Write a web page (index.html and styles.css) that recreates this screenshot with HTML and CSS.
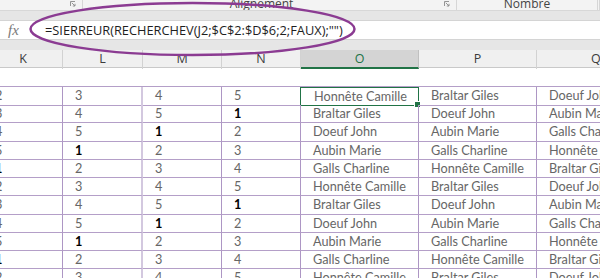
FILE: index.html
```html
<!DOCTYPE html>
<html lang="fr">
<head>
<meta charset="utf-8">
<title>Excel</title>
<link rel="stylesheet" href="styles.css">
</head>
<body>
<div class="app">
  <div class="ribbon">
    <div class="rgroup g1"><svg class="launch" viewBox="0 0 6 6" width="6" height="6"><path d="M0.5 5V0.5H5 M1.8 1.8L5 5 M5 2.8V5H2.8" fill="none" stroke="#8a8a8a" stroke-width="0.9"/></svg></div>
    <div class="rgroup g2"><span class="rlabel">Alignement</span><svg class="launch" viewBox="0 0 6 6" width="6" height="6"><path d="M0.5 5V0.5H5 M1.8 1.8L5 5 M5 2.8V5H2.8" fill="none" stroke="#8a8a8a" stroke-width="0.9"/></svg></div>
    <div class="rgroup g3"><span class="rlabel">Nombre</span></div>
    <div class="rgroup g4"></div>
  </div>
  <div class="band"></div>
  <div class="fbar">
    <div class="fx">fx</div>
    <div class="formula">=SIERREUR(RECHERCHEV(J2;$C$2:$D$6;2;FAUX);"")</div>
  </div>
  <div class="band band2"></div>
  <div class="colhead cols">
    <div class="hc hk">K</div>
    <div class="hc">L</div>
    <div class="hc">M</div>
    <div class="hc">N</div>
    <div class="hc sel">O</div>
    <div class="hc">P</div>
    <div class="hc hq">Q</div>
  </div>
  <div class="blank"></div>
  <div class="sheet" id="sheet"></div>
  <svg class="ring" width="600" height="278" viewBox="0 0 600 278"><ellipse cx="192.5" cy="29" rx="162" ry="26" fill="none" stroke="#8b3b92" stroke-width="2.5"/></svg>
</div>
<script>
  var nums = [3,4,5,1,2];
  var names = ["Honnête Camille","Braltar Giles","Doeuf John","Aubin Marie","Galls Charline"];
  var sheet = document.getElementById("sheet");
  var html = "";
  for (var r = 0; r < 11; r++) {
    html += '<div class="row cols">';
    var k = [2,3,4,5,1][r % 5];
    html += '<div class="c k"><span class="kv' + (k === 1 ? ' b' : '') + '">' + k + '</span></div>';
    for (var c = 0; c < 3; c++) {
      var v = nums[(r + c) % 5];
      html += '<div class="c' + (c === 0 ? ' lcol' : '') + (v === 1 ? ' b' : '') + '">' + v + '</div>';
    }
    for (var c2 = 0; c2 < 3; c2++) {
      html += '<div class="c' + (r === 0 && c2 === 0 ? ' active' : '') + '">' + names[(r + c2) % 5] + '</div>';
    }
    html += '</div>';
  }
  sheet.innerHTML = html;
</script>
</body>
</html>
```
FILE: styles.css
```css
* { box-sizing: border-box; }
html, body { margin: 0; padding: 0; }
body {
  width: 600px;
  height: 278px;
  overflow: hidden;
  background: #ffffff;
  font-family: "Open Sans", "Noto Sans", sans-serif;
}
.app { position: relative; width: 600px; height: 278px; overflow: hidden; }

.ribbon {
  height: 11px;
  background: #f3f3f3;
  border-bottom: 1px solid #d8d8d8;
  display: flex;
  overflow: hidden;
}
.rgroup {
  position: relative;
  height: 10px;
  border-right: 1px solid #d6d6d6;
  display: flex;
  align-items: flex-start;
  justify-content: center;
  overflow: hidden;
}
.g1 { width: 83px; }
.g2 { width: 374px; }
.g3 { width: 141px; }
.g4 { flex: 1; }
.rlabel {
  font-size: 12px;
  line-height: 12px;
  margin-top: -2px;
  color: #444444;
  white-space: nowrap;
}
.g2 .rlabel { margin-left: -16px; }
.g3 .rlabel { margin-left: 0; }
.launch { position: absolute; top: 1px; right: 6px; }

.band { height: 9px; background: #e6e6e6; }
.band2 { height: 10px; }

.fbar {
  height: 20px;
  display: flex;
  align-items: center;
  background: #ffffff;
  border-top: 1px solid #d4d4d4;
  border-bottom: 1px solid #d4d4d4;
}
.fx {
  width: 33px;
  padding-left: 8px;
  font-family: "Liberation Serif", serif;
  font-style: italic;
  font-size: 15px;
  color: #7a7a7a;
  line-height: 18px;
}
.formula {
  padding-left: 12px;
  font-size: 12.8px;
  line-height: 18px;
  color: #1e1e1e;
  white-space: nowrap;
}

.cols {
  display: grid;
  grid-template-columns: 63px 80px 79px 79px 118px 118px 1fr;
}
.colhead {
  height: 18px;
  background: #f0f0f0;
  border-bottom: 1px solid #c9c9c9;
}
.hc {
  border-right: 1px solid #d2d2d2;
  text-align: center;
  font-size: 12.5px;
  line-height: 17px;
  color: #3c3c3c;
}
.hc.hk { padding-right: 16px; }
.hc.hq { text-align: left; padding-left: 54px; }
.hc.sel {
  background: #d4d4d4;
  color: #217346;
  border-bottom: 2px solid #217346;
  border-right-color: #c0c0c0;
}

.blank { height: 18px; }

.sheet { border-top: 1px solid #b49fc8; }
.row { height: 18.23px; }
.c {
  position: relative;
  border-right: 1px solid #ad96c4;
  border-bottom: 1px solid #b49fc8;
  padding-left: 12px;
  font-family: "Lato", "Open Sans", sans-serif;
  font-size: 12.7px;
  line-height: 17px;
  color: #666666;
  white-space: nowrap;
  overflow: visible;
}
.c.lcol { border-right: 2px solid #d3c8df; }
.c.b { color: #000000; font-weight: bold; }
.c.k { padding-left: 0; overflow: hidden; }
.kv { display: inline-block; margin-left: -5px; }
.kv.b { color: #000; font-weight: bold; }
.c.active {
  border: 1px solid #217346;
  margin-left: -1px;
  padding-left: 13px;
}
.c.active::after {
  content: "";
  position: absolute;
  right: -3px;
  bottom: -3px;
  width: 5px;
  height: 5px;
  background: #217346;
  border: 1px solid #ffffff;
}

.ring { position: absolute; left: 0; top: 0; pointer-events: none; }
```
